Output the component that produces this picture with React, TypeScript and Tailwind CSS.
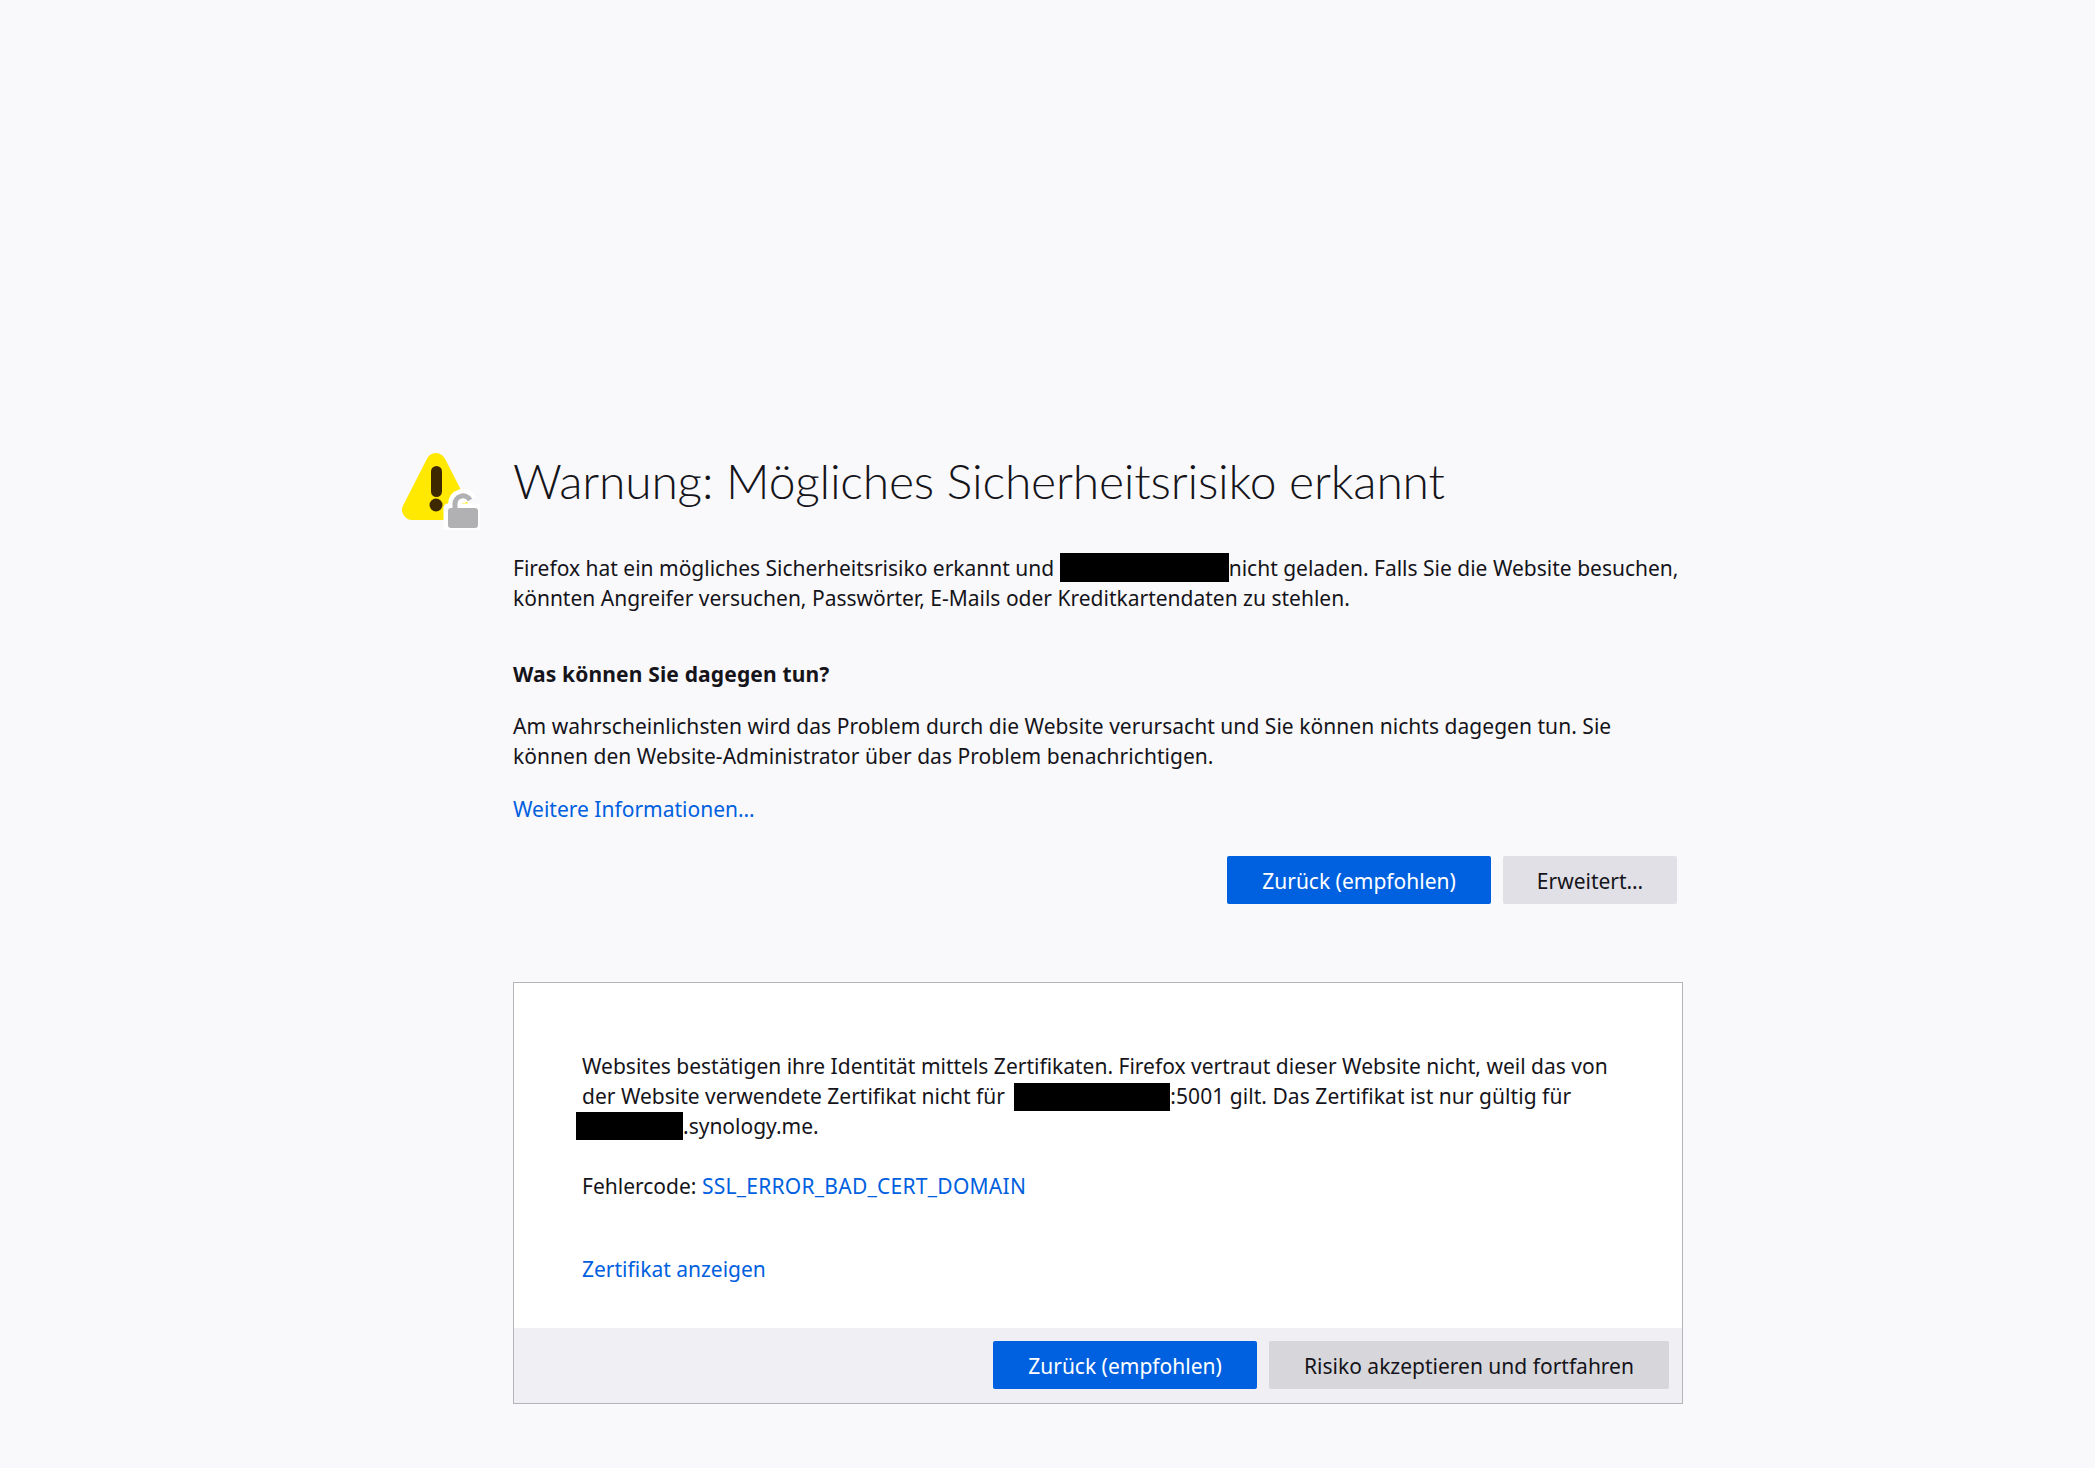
import type { FC } from 'react'

const Redacted: FC<{ className: string }> = ({ className }) => (
  <span className={`inline-block bg-black align-top ${className}`} />
)

const WarningIcon: FC = () => (
  <svg viewBox="0 0 80 80" className="mt-[2px] h-20 w-20">
    <path d="M36 13 L12 60 L60 60 Z" fill="#ffe900" stroke="#ffe900" strokeWidth="20" strokeLinejoin="round" />
    <rect x="31" y="16" width="11" height="31" rx="5.5" fill="#3e2800" />
    <circle cx="36" cy="55" r="6.5" fill="#3e2800" />
    <path d="M48 58 h30 v20 h-30 Z" fill="#ffffff" stroke="#ffffff" strokeWidth="9" strokeLinejoin="round" />
    <path d="M55 60 v-6 a8 8 0 0 1 15 -4" fill="none" stroke="#ffffff" strokeWidth="14" />
    <rect x="48" y="58" width="30" height="20" rx="3" fill="#b1b1b3" />
    <path d="M55 60 v-6 a8 8 0 0 1 15 -4" fill="none" stroke="#b1b1b3" strokeWidth="5" />
  </svg>
)

export default function App() {
  return (
    <main className="min-h-[1468px] bg-[#f9f9fb] pl-[400px] pt-[448px] font-['Noto_Sans',sans-serif] text-[21px] leading-[30px] text-[#15141a]">
      <div className="flex">
        <div className="w-[113px] shrink-0">
          <WarningIcon />
        </div>
        <div className="w-[1170px]">
          <h1 className="h-[68px] font-['Lato',sans-serif] text-[48px] font-light leading-[66px] tracking-[-0.2px]">
            Warnung: Mögliches Sicherheitsrisiko erkannt
          </h1>

          <p className="mt-[37px] whitespace-nowrap">
            Firefox hat ein mögliches Sicherheitsrisiko erkannt und <Redacted className="h-[29px] w-[169px]" />
            nicht geladen. Falls Sie die Website besuchen,
            <br />
            könnten Angreifer versuchen, Passwörter, E-Mails oder Kreditkartendaten zu stehlen.
          </p>

          <h3 className="mt-[46px] font-bold tracking-[0.15px]">Was können Sie dagegen tun?</h3>

          <p className="mt-[22px] whitespace-nowrap tracking-[0.04px]">
            Am wahrscheinlichsten wird das Problem durch die Website verursacht und Sie können nichts dagegen tun. Sie
            <br />
            können den Website-Administrator über das Problem benachrichtigen.
          </p>

          <a className="mt-[23px] block text-[#0060df]">Weitere Informationen…</a>

          <div className="mt-[32px] flex justify-end gap-3 pr-[6px]">
            <button className="h-12 w-[264px] rounded-[2px] bg-[#0061e0] pt-[2px] text-white">Zurück (empfohlen)</button>
            <button className="h-12 w-[174px] rounded-[2px] bg-[#e0e0e6] pt-[2px]">Erweitert…</button>
          </div>

          <section className="mt-[78px] border border-[#b5b5b9] bg-white">
            <div className="pl-[68px] pt-[68px]">
              <p className="whitespace-nowrap">
                Websites bestätigen ihre Identität mittels Zertifikaten. Firefox vertraut dieser Website nicht, weil das von
                <br />
                der Website verwendete Zertifikat nicht für <Redacted className="ml-[4px] mt-[2px] h-[28px] w-[156px]" />
                <span className="tracking-[0.05px]">:5001 gilt. Das Zertifikat ist nur gültig für</span>
                <br />
                <Redacted className="-ml-[6px] mt-[1px] h-[28px] w-[107px]" />
                .synology.me.
              </p>
              <p className="mt-[30px]">
                Fehlercode: <a className="tracking-[0.25px] text-[#0060df]">SSL_ERROR_BAD_CERT_DOMAIN</a>
              </p>
              <a className="mt-[53px] block text-[#0060df]">Zertifikat anzeigen</a>
            </div>
            <div className="mt-[44px] flex h-[75px] justify-end gap-3 bg-[#f0f0f4] pr-[13px] pt-[13px]">
              <button className="h-12 w-[264px] rounded-[2px] bg-[#0061e0] pt-[2px] text-white">Zurück (empfohlen)</button>
              <button className="h-12 w-[400px] rounded-[2px] bg-[#d7d7db] pt-[2px]">Risiko akzeptieren und fortfahren</button>
            </div>
          </section>
        </div>
      </div>
    </main>
  )
}
